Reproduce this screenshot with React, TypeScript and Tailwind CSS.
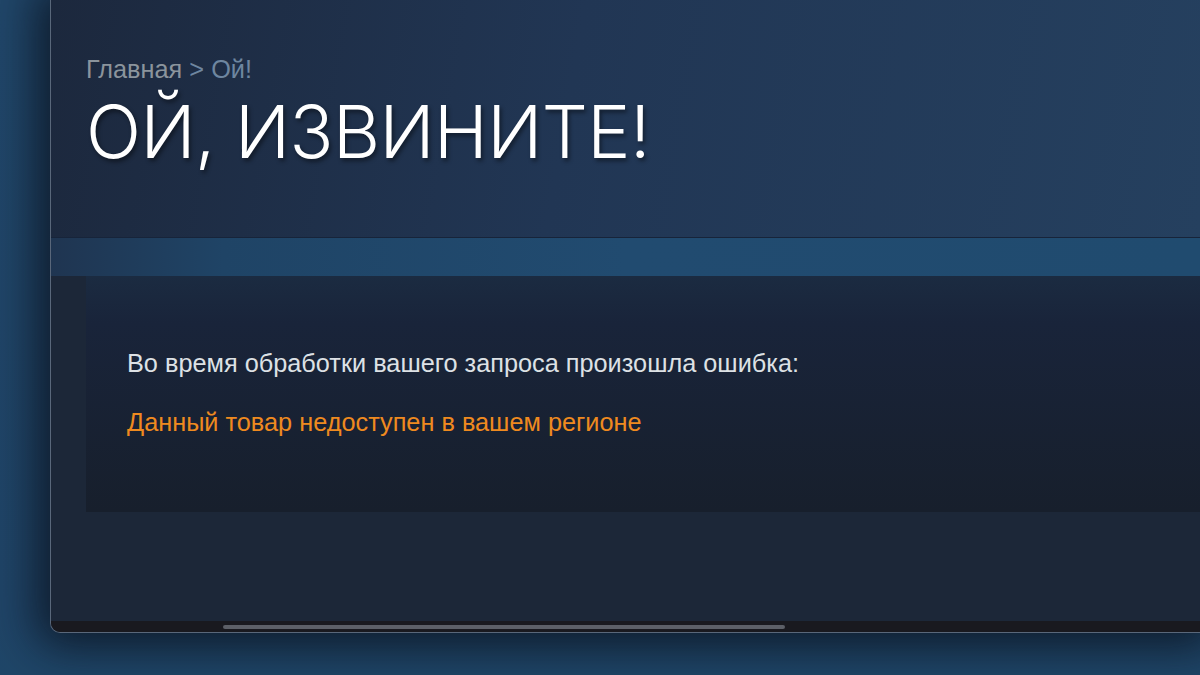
export default function App() {
  return (
    <div className="relative w-[1200px] h-[675px] overflow-hidden bg-[linear-gradient(to_bottom,#21476a_0%,#204568_90%,#1f4668_100%)]">
      {/* browser window */}
      <div className="ml-[50px] h-[633px] flex flex-col overflow-hidden rounded-bl-[10px] border-l border-b border-[#59677a] bg-[#1c2738] shadow-[0_0_45px_14px_rgba(8,14,24,0.75)]">
        {/* page header */}
        <div className="h-[237px] shrink-0 bg-[linear-gradient(100deg,#1c283d_0%,#213654_45%,#25405f_100%)] pl-[35px] pt-[52px]">
          <div className="text-[25.3px] leading-[34px] font-['Liberation_Sans',sans-serif]">
            <span className="text-[#8b949c]">Главная</span>
            <span className="text-[#6e86a0]"> &gt; Ой!</span>
          </div>
          <h1 className="mt-[6px] text-[72.5px] leading-[80px] font-light text-white font-['Inter','Open_Sans',sans-serif] tracking-[-0.5px] [text-shadow:2px_3px_4px_rgba(0,0,0,0.45)]">
            ОЙ, ИЗВИНИТЕ!
          </h1>
        </div>

        {/* blue band */}
        <div className="h-[39px] shrink-0 border-t border-[#17243a] bg-[linear-gradient(to_right,#1f3551_0%,#1f4466_15%,#214b70_50%,#204b6f_100%)]" />

        {/* error panel */}
        <div className="ml-[35px] h-[236px] shrink-0 bg-[linear-gradient(to_bottom,#1b2b41_0%,#19243a_20%,#171f2c_100%)] pl-[41px] pt-[71px] font-['Liberation_Sans',sans-serif]">
          <p className="text-[25.3px] leading-[32px] text-[#dde1e5]">
            Во время обработки вашего запроса произошла ошибка:
          </p>
          <p className="mt-[27px] text-[25.3px] leading-[32px] text-[#ef8a1f]">
            Данный товар недоступен в вашем регионе
          </p>
        </div>

        <div className="flex-1" />

        {/* scroll bar strip */}
        <div className="h-[11px] shrink-0 bg-[#19191f] flex items-center pl-[172px]">
          <div className="w-[562px] h-[4px] rounded-full bg-[#5c5f67]" />
        </div>
      </div>
    </div>
  );
}
